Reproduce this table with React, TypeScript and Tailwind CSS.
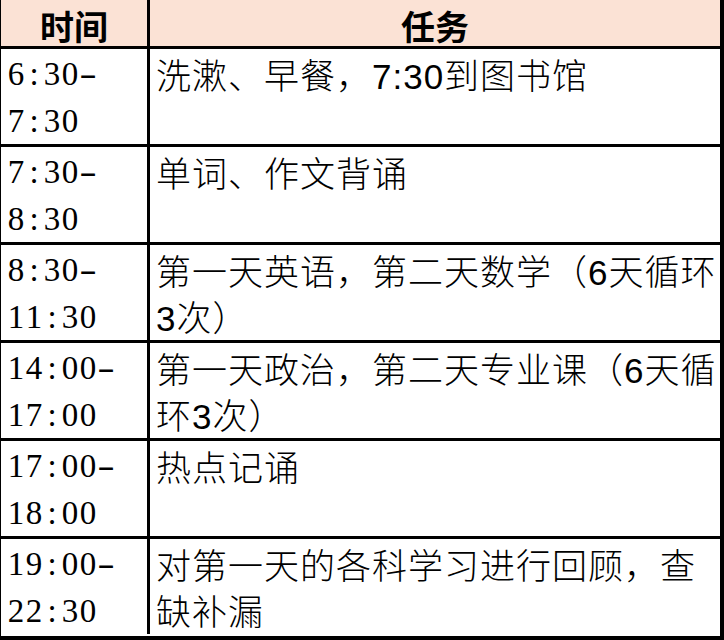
import React from 'react';

const rows: { time: [string, string]; task: [string, string] }[] = [
  { time: ['6:30-', '7:30'], task: ['洗漱、早餐，7:30到图书馆', ''] },
  { time: ['7:30-', '8:30'], task: ['单词、作文背诵', ''] },
  { time: ['8:30-', '11:30'], task: ['第一天英语，第二天数学（6天循环', '3次）'] },
  { time: ['14:00-', '17:00'], task: ['第一天政治，第二天专业课（6天循', '环3次）'] },
  { time: ['17:00-', '18:00'], task: ['热点记诵', ''] },
  { time: ['19:00-', '22:30'], task: ['对第一天的各科学习进行回顾，查', '缺补漏'] },
];

const serif = { fontFamily: '"Liberation Serif", "Noto Sans CJK SC", serif' };

// half-width cells, like the SimSun digits in the sheet
const TimeLine = ({ text }: { text: string }) => (
  <div className="flex h-[47px] items-center">
    {text.split('').map((c, i) => (
      <span
        key={i}
        className={c === '-' ? 'inline-block w-[18px] text-center scale-x-[1.6]' : 'inline-block w-[18px] text-center'}
      >
        {c}
      </span>
    ))}
  </div>
);

const App: React.FC = () => {
  return (
    <div className="w-[724px] h-[640px] bg-white overflow-hidden">
      <div className="w-[724px] h-[640px] border-l border-r-[4px] border-b-[4px] border-black flex flex-col text-black">
        {/* header */}
        <div
          className="flex h-[46px] shrink-0 bg-[#fbe2d5] font-bold text-[34px]"
          style={{ fontFamily: '"Noto Sans CJK SC", sans-serif' }}
        >
          <div className="w-[146px] shrink-0 flex items-center justify-center pt-[4px]">时间</div>
          <div className="flex-1 border-l-[3px] border-black flex items-center justify-center pt-[4px]">任务</div>
        </div>

        {rows.map((r, i) => (
          <div key={i} className="flex h-[98px] shrink-0 border-t-[3px] border-black">
            <div className="w-[146px] shrink-0 pl-[6px] pt-[2px] text-[33px] leading-none" style={serif}>
              <TimeLine text={r.time[0]} />
              <TimeLine text={r.time[1]} />
            </div>
            <div
              className="flex-1 border-l-[3px] border-black pl-[6px] pt-[5px] text-[35px] font-light tracking-[1px] whitespace-nowrap"
              style={{ fontFamily: '"Liberation Sans", "Noto Sans CJK SC", sans-serif' }}
            >
              <div className="h-[46px] leading-[46px]">{r.task[0]}</div>
              <div className="h-[46px] leading-[46px]">{r.task[1]}</div>
            </div>
          </div>
        ))}
      </div>
    </div>
  );
};

export default App;
